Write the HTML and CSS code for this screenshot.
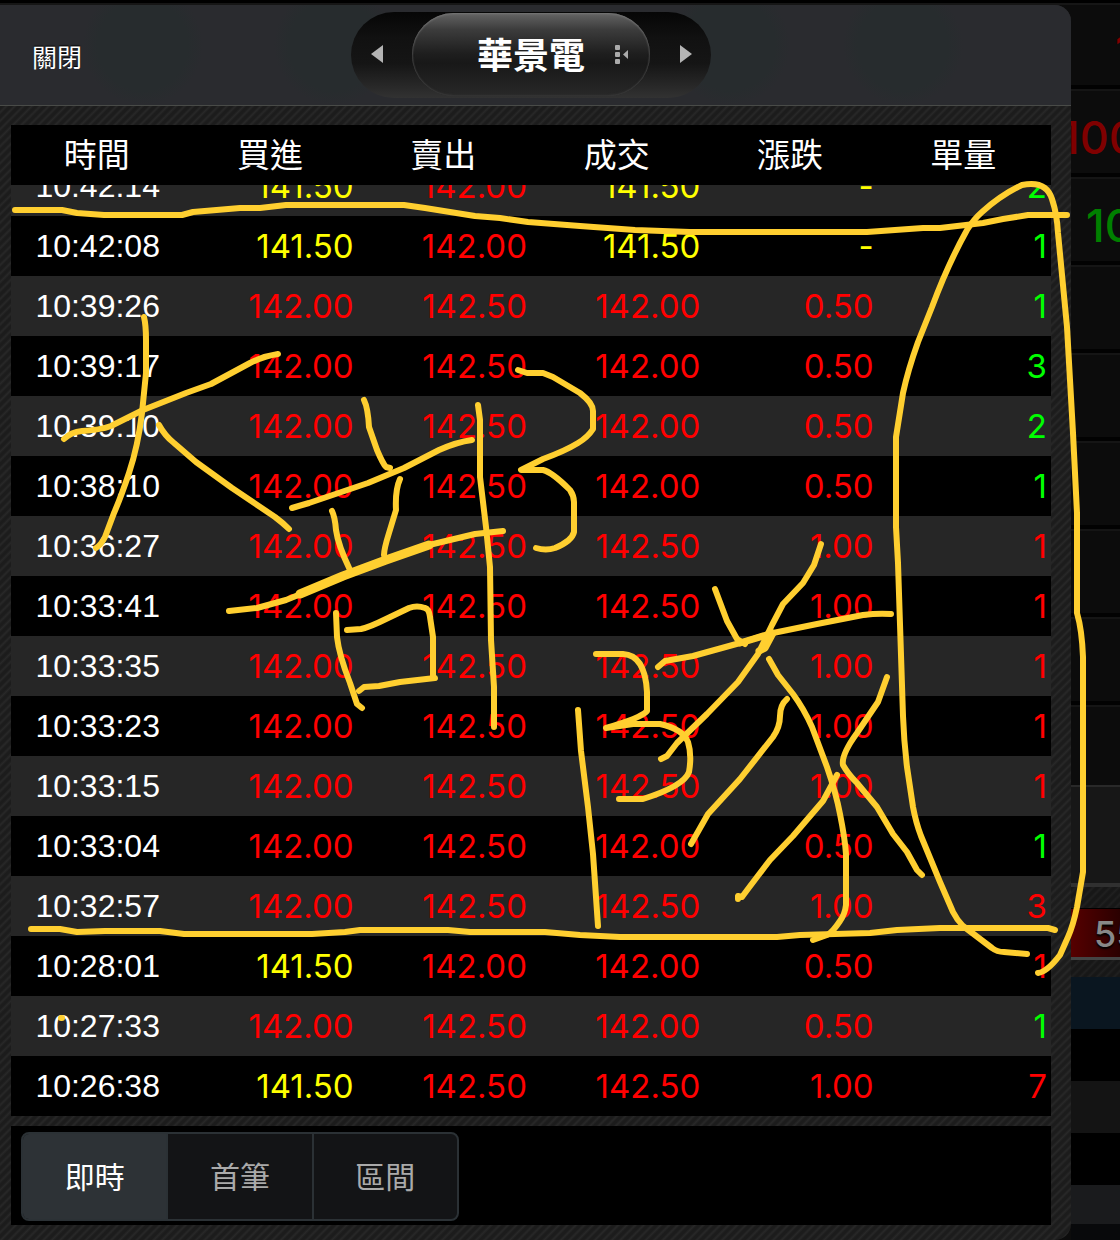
FILE: index.html
```html
<!DOCTYPE html>
<html lang="zh-Hant">

<head>
    <meta charset="UTF-8">
    <meta name="viewport" content="width=device-width, initial-scale=1.0">
    <title>華景電</title>
    <link rel="stylesheet" href="styles.css">
</head>

<body>
    <div class="screen">
        <main class="panel">
            <header class="topbar">
                <button class="close">關閉</button>
                <div class="switcher">
                    <button class="arrow" aria-label="上一檔">
                        <svg width="12" height="20" viewBox="0 0 12 20"><path d="M12 1v18L0 10z" fill="#b4b4b4"/></svg>
                    </button>
                    <button class="stock">
                        <span class="name">華景電</span>
                        <svg class="menu-icon" width="15" height="20" viewBox="0 0 15 20" fill="#aaa">
                            <rect x="1" y="0" width="5" height="5" rx="1"/>
                            <rect x="1" y="7" width="5" height="5" rx="1"/>
                            <rect x="1" y="14" width="5" height="5" rx="1"/>
                            <path d="M14 5v9l-5-4.500z"/>
                        </svg>
                    </button>
                    <button class="arrow" aria-label="下一檔">
                        <svg width="12" height="20" viewBox="0 0 12 20"><path d="M0 1v18l12-9z" fill="#b4b4b4"/></svg>
                    </button>
                </div>
            </header>

            <div class="content">
                <table class="ticks">
                    <thead>
                        <tr><th>時間</th><th>買進</th><th>賣出</th><th>成交</th><th>漲跌</th><th>單量</th></tr>
                    </thead>
                    <tbody>
                        <tr><td>10:42:14</td><td class="flat">141.50</td><td class="up">142.00</td><td class="flat">141.50</td><td class="flat">-</td><td class="down">2</td></tr>
                        <tr><td>10:42:08</td><td class="flat">141.50</td><td class="up">142.00</td><td class="flat">141.50</td><td class="flat">-</td><td class="down">1</td></tr>
                        <tr><td>10:39:26</td><td class="up">142.00</td><td class="up">142.50</td><td class="up">142.00</td><td class="up">0.50</td><td class="down">1</td></tr>
                        <tr><td>10:39:17</td><td class="up">142.00</td><td class="up">142.50</td><td class="up">142.00</td><td class="up">0.50</td><td class="down">3</td></tr>
                        <tr><td>10:39:10</td><td class="up">142.00</td><td class="up">142.50</td><td class="up">142.00</td><td class="up">0.50</td><td class="down">2</td></tr>
                        <tr><td>10:38:10</td><td class="up">142.00</td><td class="up">142.50</td><td class="up">142.00</td><td class="up">0.50</td><td class="down">1</td></tr>
                        <tr><td>10:36:27</td><td class="up">142.00</td><td class="up">142.50</td><td class="up">142.50</td><td class="up">1.00</td><td class="up">1</td></tr>
                        <tr><td>10:33:41</td><td class="up">142.00</td><td class="up">142.50</td><td class="up">142.50</td><td class="up">1.00</td><td class="up">1</td></tr>
                        <tr><td>10:33:35</td><td class="up">142.00</td><td class="up">142.50</td><td class="up">142.50</td><td class="up">1.00</td><td class="up">1</td></tr>
                        <tr><td>10:33:23</td><td class="up">142.00</td><td class="up">142.50</td><td class="up">142.50</td><td class="up">1.00</td><td class="up">1</td></tr>
                        <tr><td>10:33:15</td><td class="up">142.00</td><td class="up">142.50</td><td class="up">142.50</td><td class="up">1.00</td><td class="up">1</td></tr>
                        <tr><td>10:33:04</td><td class="up">142.00</td><td class="up">142.50</td><td class="up">142.00</td><td class="up">0.50</td><td class="down">1</td></tr>
                        <tr><td>10:32:57</td><td class="up">142.00</td><td class="up">142.50</td><td class="up">142.50</td><td class="up">1.00</td><td class="up">3</td></tr>
                        <tr><td>10:28:01</td><td class="flat">141.50</td><td class="up">142.00</td><td class="up">142.00</td><td class="up">0.50</td><td class="up">1</td></tr>
                        <tr><td>10:27:33</td><td class="up">142.00</td><td class="up">142.50</td><td class="up">142.00</td><td class="up">0.50</td><td class="down">1</td></tr>
                        <tr><td>10:26:38</td><td class="flat">141.50</td><td class="up">142.50</td><td class="up">142.50</td><td class="up">1.00</td><td class="up">7</td></tr>
                    </tbody>
                </table>

                <nav class="footer">
                    <div class="tabs">
                        <button class="tab active">即時</button>
                        <button class="tab">首筆</button>
                        <button class="tab">區間</button>
                    </div>
                </nav>
            </div>
        </main>

        <!-- quote page behind the panel -->
        <aside class="behind">
            <div class="quote quote-edge">1</div>
            <div class="quote quote-up">100</div>
            <div class="quote quote-down">10</div>
            <div class="quote"></div>
            <div class="quote"></div>
            <div class="quote"></div>
            <div class="quote"></div>
            <div class="quote"></div>
            <div class="quote quote-last"></div>
            <div class="chart"></div>
            <div class="badge-row"><div class="badge">55</div></div>
            <div class="line head"></div>
            <div class="line"></div>
            <div class="line odd"></div>
            <div class="line"></div>
            <div class="toolbar"></div>
        </aside>
    </div>

    <!-- handwritten marks -->
    <svg class="marks" viewBox="0 0 1120 1240" fill="none" stroke="#ffcf30" stroke-width="6" stroke-linecap="round" stroke-linejoin="round" aria-hidden="true">
        <path d="M15 210H62L77 213L104 215H182L193 212L240 208H260L286 205H404L425 208L475 216L500 218L528 222L580 226L635 230L690 232H867L923 228H940L983 223L1003 219L1028 215H1067"/>
        <path d="M31 929H60L77 932L105 931H160L184 934H312L345 932L360 930H448L470 932H545L580 935L620 937H777L800 935L870 933L897 930L940 928H1048L1055 930"/>
        <path d="M1027 954L1004 952Q997 952 992 948L963 926Q957 920 953 912L940 882L921 836Q916 823 913 807L907 767Q904 742 903 716L901 655L898 563L896 527V437L903 393Q908 370 918 342L932 307Q948 264 967 230Q974 219 982 212Q1001 195 1022 185Q1046 180 1052 199Q1057 214 1058 233L1067 327L1073 433L1077 513V613Q1082 630 1083 657V872L1077 907Q1073 926 1068 937L1060 955Q1047 972 1038 973"/>
        <path d="M144 317Q146 325 146 340V373L142 413Q138 446 129 473Q121 497 114 513L105 537Q101 545 96 548"/>
        <path d="M64 439Q71 432 82 431Q100 430 111 426L143 410L186 393L211 384L250 363Q264 356 278 354"/>
        <path d="M159 425Q165 436 174 443L196 462L232 488L275 517Q283 523 289 529"/>
        <path d="M364 400Q368 408 369 427L377 450Q383 464 386 467L390 468"/>
        <path d="M292 508L309 503L368 483L404 468L439 450Q457 442 472 440"/>
        <path d="M400 479Q395 490 396 510L389 533Q384 549 384 555"/>
        <path d="M332 511Q335 517 336 530Q338 545 350 570"/>
        <path d="M229 611L257 608L286 600L343 577L386 560L429 545L475 534L503 531"/>
        <path d="M300 594L343 576L386 560L429 545" stroke-width="9"/>
        <path d="M336 613L337 637Q339 655 350 683L357 704L362 708"/>
        <path d="M347 630L361 629Q370 627 386 619L409 608Q417 605 425 608Q429 609 430 617L433 637V677"/>
        <path d="M359 691L364 687L379 686L400 682L435 678"/>
        <path d="M478 405L480 420V477L486 527L490 567L491 640L494 687V727"/>
        <path d="M518 370L527 373H543L553 377L580 393Q593 403 593 411V429Q588 437 578 443Q565 451 543 459L521 470H543Q552 472 570 490Q574 496 574 502V532Q572 541 555 548Q546 551 536 548"/>
        <path d="M578 710L581 751L588 807L593 854L598 926"/>
        <path d="M596 654H623Q645 655 647 692V711Q641 718 606 728L633 724H660Q683 729 688 742Q692 755 689 772Q684 786 643 799H619"/>
        <path d="M715 589L727 621L737 639L745 644"/>
        <path d="M658 667L665 661L693 656L740 643L773 633L817 624L863 615Q878 613 891 614"/>
        <path d="M740 643L773 633L765 648L759 651" stroke-width="7"/>
        <path d="M821 544L814 565L803 583L783 604L772 625L758 654L738 682L707 714L677 743L667 756L661 759"/>
        <path d="M769 659L778 675L793 694Q804 709 812 727L827 767Q836 793 840 814Q845 839 846 854V905Q845 914 840 921Q832 933 827 935L813 940"/>
        <path d="M787 699Q780 705 780 716Q780 727 773 737L740 779L708 814L691 844"/>
        <path d="M837 775L823 801L793 836L770 860Q747 890 742 897L738 896V899"/>
        <path d="M887 677L878 702L857 733Q841 755 843 765Q848 774 857 783L877 807L893 834L907 852L917 870L922 875"/>
        <path d="M61 1018h1"/>
    </svg>
</body>

</html>
```
FILE: styles.css
```css
* {
    box-sizing: border-box;
}

body {
    margin: 0;
    position: relative;
    background: #000;
    color: #fff;
    font-family: "Liberation Sans", "Noto Sans CJK TC", sans-serif;
}

button {
    border: none;
    background: none;
    padding: 0;
    color: inherit;
    font-family: inherit;
    cursor: pointer;
}

svg {
    display: block;
}

.screen {
    display: grid;
    grid-template-columns: 1fr 49px;
    height: 100vh;
    min-height: 600px;
    padding-top: 5px;
    background: linear-gradient(#000 3px, #161616 3px, #161616 5px, #0c0c0c 5px);
}

.panel {
    display: flex;
    flex-direction: column;
    min-height: 0;
    border-radius: 0 16px 16px 0;
    overflow: hidden;
    background: repeating-linear-gradient(135deg, #1c1c1c 0, #1c1c1c 2px, #282828 4px, #1c1c1c 6px);
}

/* top bar */
.topbar {
    display: grid;
    grid-template-columns: 1fr 360px 1fr;
    align-items: center;
    height: 101px;
    padding-right: 9px;
    border-bottom: 1px solid #494b48;
    background:
        radial-gradient(circle at 143px 40px, #272c2e 45px, transparent 60px),
        radial-gradient(circle at 334px 40px, #272c2e 45px, transparent 60px),
        radial-gradient(circle at 730px 40px, #272c2e 45px, transparent 60px),
        radial-gradient(circle at 903px 40px, #272c2e 45px, transparent 60px),
        #2a2b2f;
}

.close {
    justify-self: start;
    padding: 6px 0 0 32px;
    font-size: 25px;
    line-height: 36px;
    text-shadow: 0 -1px 1px #000;
}

.switcher {
    display: grid;
    grid-template-columns: 1fr 238px 1fr;
    align-items: center;
    height: 86px;
    padding: 1px 0 2px;
    border-radius: 43px;
    background: linear-gradient(#060606, #111 30%, #151515 60%, #323232);
}

.arrow {
    display: flex;
    justify-content: center;
    padding: 0 10px 2px 0;
}

.stock + .arrow {
    padding: 0 0 2px 10px;
}

.stock {
    display: grid;
    grid-template-columns: 1fr auto 1fr;
    align-items: center;
    height: 83px;
    border-radius: 42px;
    background: linear-gradient(#646464, #3c3c3c 20%, #1f1f1f 48%, #181818 60%, #282828);
    box-shadow: inset 0 1px 2px #777, inset 0 -1px 2px #333;
}

.name {
    grid-column: 2;
    padding-top: 4px;
    font-size: 36px;
    font-weight: 600;
    line-height: 48px;
}

.menu-icon {
    justify-self: center;
    margin-left: 8px;
}

/* tick list */
.content {
    flex: 1;
    display: flex;
    flex-direction: column;
    gap: 10px;
    min-height: 0;
    padding: 19px 20px 15px 11px;
}

.ticks {
    flex: 1;
    display: flex;
    flex-direction: column;
    min-height: 0;
    overflow: hidden;
}

.ticks thead {
    display: block;
    background: #000;
}

/* list is scrolled to the end, so the first row is cut */
.ticks tbody {
    flex: 1;
    display: flex;
    flex-direction: column;
    justify-content: flex-end;
    min-height: 0;
    overflow: hidden;
}

.ticks tr {
    flex-shrink: 0;
    display: grid;
    grid-template-columns: repeat(6, 1fr);
    height: 60px;
}

.ticks tbody tr {
    background: #000;
}

.ticks tbody tr:nth-child(odd) {
    background: #262626;
}

.ticks th {
    padding: 2px 2px 0 0;
    font-size: 33px;
    font-weight: 400;
    line-height: 58px;
}

.ticks td {
    padding: 0 4px;
    font-family: Inter, sans-serif;
    font-size: 33px;
    line-height: 60px;
    text-align: right;
}

.ticks td:first-child {
    padding: 0;
    font-family: "Liberation Sans", sans-serif;
    font-size: 32px;
    text-align: center;
}

.ticks .up {
    color: #f00;
}

.ticks .down {
    color: #0f0;
}

.ticks .flat {
    color: #ff0;
}

/* tabs */
.footer {
    padding: 6px 10px 4px;
    background: #000;
}

.tabs {
    display: flex;
    width: 438px;
    border: 2px solid #2b3135;
    border-radius: 8px;
    overflow: hidden;
    background: #131416;
}

.tab {
    flex: 1;
    height: 85px;
    padding-bottom: 4px;
    font-size: 30px;
    font-weight: 400;
    color: #aaa;
}

.tab + .tab {
    border-left: 2px solid #2b3135;
}

.tab.active {
    background: #2d3236;
    color: #fff;
}

/* page behind the panel */
.behind {
    display: flex;
    flex-direction: column;
    min-width: 0;
    overflow: hidden;
    font-family: Inter, sans-serif;
}

.quote {
    flex: 0 0 88px;
    display: flex;
    align-items: center;
    overflow: hidden;
    padding-top: 10px;
    border-top: 2px solid #151515;
    border-bottom: 4px solid #020202;
    background: #0c0c0c;
    font-size: 45px;
    font-weight: 500;
    color: #800000;
}

.quote-edge {
    flex-basis: 84px;
    border-top: none;
    padding-left: 44px;
}

.quote-up {
    justify-content: center;
    padding-left: 8px;
}

.quote-down {
    padding-left: 15px;
    color: #008000;
}

.quote-last {
    flex-basis: 80px;
    border-bottom: none;
}

.chart {
    flex: 0 0 98px;
    border-top: 2px solid #292929;
    background: #171717;
}

.badge-row {
    flex: 0 0 94px;
    padding: 21px 0 17px;
    border-top: 4px solid #303030;
    background: repeating-linear-gradient(135deg, #171717 0, #171717 2px, #202020 4px, #171717 6px);
}

.badge {
    height: 52px;
    padding-left: 23px;
    border-top: 1px solid #000;
    border-bottom: 3px solid #444;
    background: linear-gradient(90deg, #560000, #2a0000);
    font-size: 36px;
    font-weight: 500;
    line-height: 50px;
    color: #888;
    text-shadow: 0 2px 2px #000;
}

.line {
    flex: 0 0 52px;
    background: #000;
}

.line.head {
    background: #0a1620;
}

.line.odd {
    background: #141414;
}

.toolbar {
    flex: 1;
    border-bottom: 16px solid #08090b;
    background: #1a1b1d;
}

.marks {
    position: absolute;
    top: 0;
    left: 0;
    width: 100%;
    pointer-events: none;
}
```
